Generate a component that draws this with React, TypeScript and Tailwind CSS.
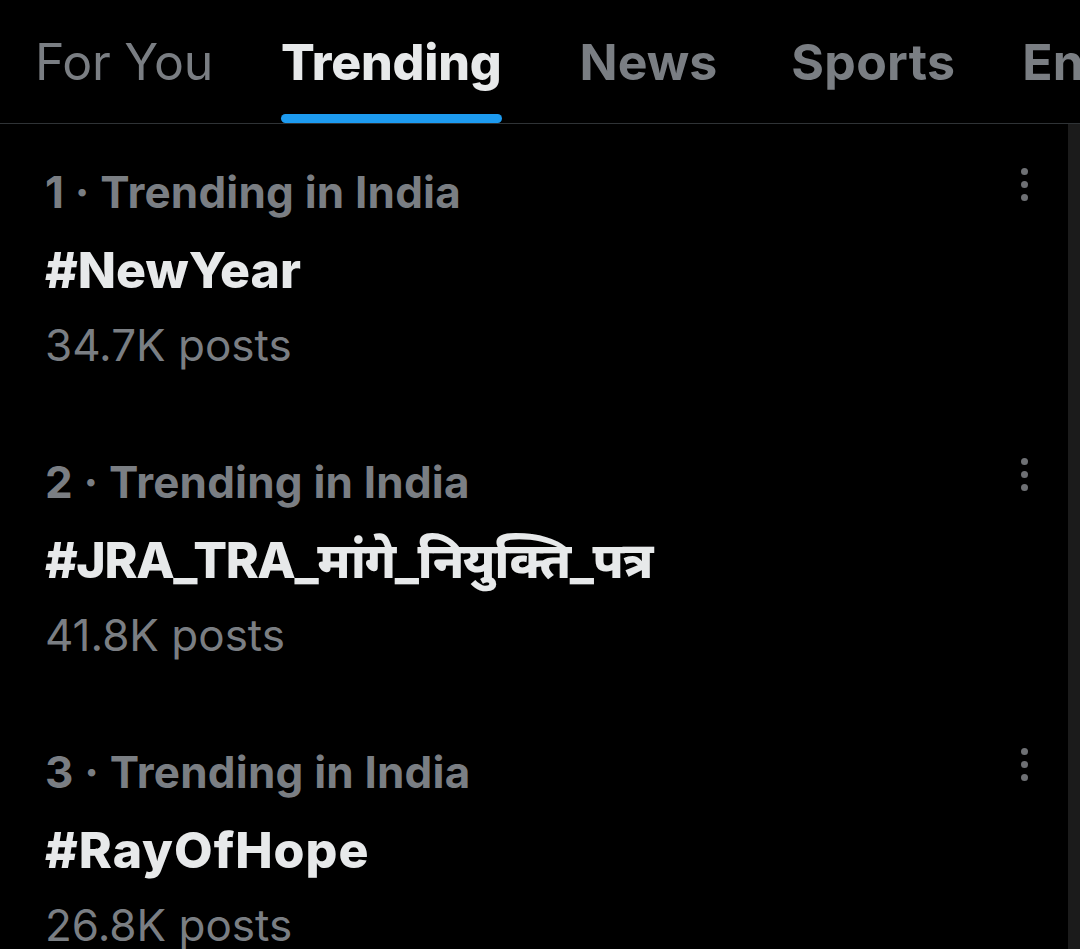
import React from "react";

const trends = [
  { rank: 1, tag: "#NewYear", posts: "34.7K posts", tagClass: "tracking-[0px]" },
  { rank: 2, tag: "#JRA_TRA_मांगे_नियुक्ति_पत्र", posts: "41.8K posts", tagClass: "tracking-[-1.4px]" },
  { rank: 3, tag: "#RayOfHope", posts: "26.8K posts", tagClass: "tracking-[1px]" },
];

function Dots() {
  return (
    <div className="flex flex-col items-center gap-[6px] pt-[6px]">
      <span className="block h-[7px] w-[7px] rounded-full bg-[#6e7074]" />
      <span className="block h-[7px] w-[7px] rounded-full bg-[#6e7074]" />
      <span className="block h-[7px] w-[7px] rounded-full bg-[#6e7074]" />
    </div>
  );
}

export default function App() {
  return (
    <div
      className="h-[949px] w-[1080px] overflow-hidden bg-black"
      style={{ fontFamily: "Inter, 'Noto Sans', 'Noto Sans Devanagari', 'Liberation Sans', sans-serif" }}
    >
      <div className="flex h-[124px] items-start overflow-hidden whitespace-nowrap border-b border-[#2f3336] pl-[35px] pt-[32px]">
        <div className="text-[50px] font-normal leading-[60px] tracking-[-0.3px] text-[#7a7e83]">For You</div>
        <div className="ml-[68px] flex flex-col">
          <div className="text-[50px] font-extrabold leading-[60px] tracking-[-0.2px] text-[#e7e9ea]">Trending</div>
          <div className="mt-[22px] h-[9px] rounded-full bg-[#1d9bf0]" />
        </div>
        <div className="ml-[78px] text-[50px] font-bold leading-[60px] text-[#7a7e83]">News</div>
        <div className="ml-[74px] text-[50px] font-bold leading-[60px] tracking-[0.3px] text-[#7a7e83]">Sports</div>
        <div className="ml-[67px] text-[50px] font-bold leading-[60px] text-[#7a7e83]">Entertainment</div>
      </div>
      <div className="flex h-[825px]">
        <div className="flex-1">
          {trends.map((t) => (
            <div key={t.rank} className="flex pb-[42px] pl-[45px] pr-[40px] pt-[38px]">
              <div className="flex-1 whitespace-nowrap">
                <div className="text-[44px] font-bold leading-[60px] tracking-[0.2px] text-[#7a7e83]">
                  {t.rank} · Trending in India
                </div>
                <div className={`text-[50px] font-extrabold leading-[96px] text-[#e7e9ea] ${t.tagClass}`}>
                  {t.tag}
                </div>
                <div className="text-[44px] font-normal leading-[54px] text-[#7a7e83]">{t.posts}</div>
              </div>
              <Dots />
            </div>
          ))}
        </div>
        <div className="w-[12px] bg-[#1b1b1b]" />
      </div>
    </div>
  );
}
